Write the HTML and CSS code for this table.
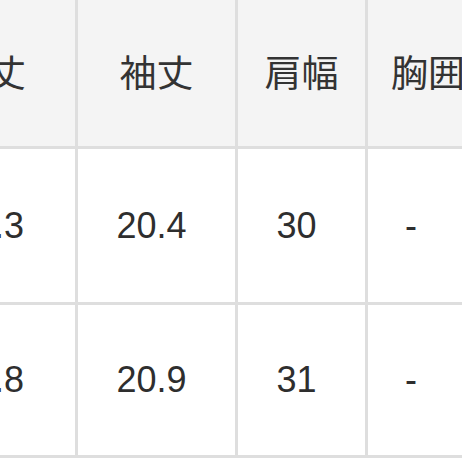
FILE: index.html
```html
<!DOCTYPE html>
<html lang="ja">
<head>
<meta charset="utf-8">
<link rel="stylesheet" href="styles.css">
</head>
<body>
<div class="table">
  <div class="cell head">着丈</div>
  <div class="cell head">袖丈</div>
  <div class="cell head">肩幅</div>
  <div class="cell head">胸囲</div>

  <div class="cell first">35.3</div>
  <div class="cell">20.4</div>
  <div class="cell">30</div>
  <div class="cell dash">-</div>

  <div class="cell first">36.8</div>
  <div class="cell">20.9</div>
  <div class="cell">31</div>
  <div class="cell dash">-</div>
</div>
</body>
</html>
```

FILE: styles.css
```css
html, body {
  margin: 0;
  padding: 0;
  overflow: hidden;
  background: #ffffff;
}

.table {
  display: grid;
  grid-template-columns: 172px 157px 127px 120px;
  grid-template-rows: 146px 153px 150px;
  gap: 3px;
  padding-bottom: 3px;
  background: #dedede;
  margin-left: -97px;
  width: max-content;
  font-family: "Liberation Sans", "Noto Sans CJK JP", sans-serif;
  font-size: 36px;
  color: #2e2e2e;
}

.cell {
  display: flex;
  align-items: center;
  justify-content: center;
  background: #ffffff;
  padding-right: 10px;
}

.cell.head {
  background: #f4f4f4;
  padding-right: 0;
  padding-bottom: 4px;
  font-size: 37px;
  color: #333333;
}

.cell.first {
  padding-right: 0;
}

.cell.dash {
  padding-right: 34px;
}
```
